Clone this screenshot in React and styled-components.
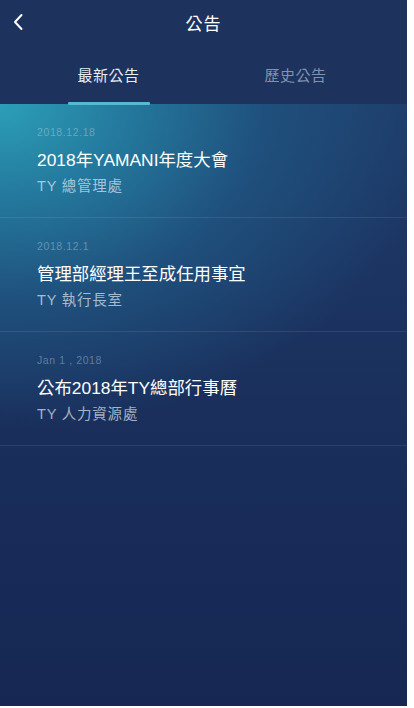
import React from "react";
import styled, { createGlobalStyle } from "styled-components";

const Global = createGlobalStyle`
  html, body { margin: 0; padding: 0; background: #ffffff; }
  body { font-family: "Liberation Sans", "Noto Sans CJK TC", sans-serif; }
`;

const Screen = styled.div`
  width: 407px;
  height: 706px;
  display: flex;
  flex-direction: column;
  background: #1d335e;
  overflow: hidden;
`;

const Header = styled.header`
  height: 48px;
  box-sizing: border-box;
  padding-bottom: 4px;
  display: grid;
  grid-template-columns: 48px 1fr 48px;
  align-items: center;
  color: #fff;
`;

const Back = styled.button`
  border: 0;
  background: none;
  padding: 0 0 0 12px;
  display: flex;
  align-items: center;
  height: 100%;
  cursor: pointer;
`;

const Title = styled.h1`
  margin: 0;
  text-align: center;
  font-size: 17px;
  font-weight: 400;
  color: #ffffff;
  letter-spacing: 1px;
`;

const Tabs = styled.nav`
  height: 56px;
  display: grid;
  grid-template-columns: 1fr 1fr;
  padding: 0 18px 0 15px;
`;

const Tab = styled.div`
  position: relative;
  display: flex;
  align-items: center;
  justify-content: center;
  padding-bottom: 3px;
  font-size: 15px;
  color: ${(p) => (p.$active ? "#e6edf5" : "rgba(200,212,230,0.6)")};
  letter-spacing: 0.5px;
  &::after {
    content: "";
    display: ${(p) => (p.$active ? "block" : "none")};
    position: absolute;
    bottom: -1px;
    left: 50%;
    transform: translateX(-50%);
    width: 82px;
    height: 3px;
    border-radius: 1px;
    background: #56b9d3;
  }
`;

const Content = styled.main`
  flex: 1;
  background:
    radial-gradient(ellipse 120% 60% at 0% 0%, #2c9fb7 0%, #247a9e 25%, #1f4f7c 55%, rgba(30, 58, 100, 0) 90%),
    linear-gradient(180deg, #1e3b6a 0%, #1a2f5c 50%, #162753 100%);
`;

const Item = styled.article`
  height: 114px;
  box-sizing: border-box;
  padding: 21px 20px 0 37px;
  border-bottom: 1px solid rgba(255, 255, 255, 0.09);
`;

const Date = styled.div`
  font-size: 10.5px;
  letter-spacing: 0.6px;
  color: rgba(210, 225, 240, 0.38);
  line-height: 14px;
`;

const Headline = styled.div`
  margin-top: 9px;
  font-size: 17.4px;
  line-height: 24px;
  color: #ffffff;
`;

const Sub = styled.div`
  margin-top: 4px;
  font-size: 14.5px;
  line-height: 20px;
  letter-spacing: 0.8px;
  color: rgba(220, 230, 242, 0.72);
`;

const items = [
  { date: "2018.12.18", title: "2018年YAMANI年度大會", sub: "TY 總管理處" },
  { date: "2018.12.1", title: "管理部經理王至成任用事宜", sub: "TY 執行長室" },
  { date: "Jan 1 , 2018", title: "公布2018年TY總部行事曆", sub: "TY 人力資源處" },
];

export default function App() {
  return (
    <>
      <Global />
      <Screen>
        <Header>
          <Back aria-label="back">
            <svg width="12" height="18" viewBox="0 0 12 18">
              <path d="M9.5 2 L3 9 L9.5 16" stroke="#fff" strokeWidth="2" fill="none" strokeLinecap="round" strokeLinejoin="round" />
            </svg>
          </Back>
          <Title>公告</Title>
          <span />
        </Header>
        <Tabs>
          <Tab $active>最新公告</Tab>
          <Tab>歷史公告</Tab>
        </Tabs>
        <Content>
          {items.map((it) => (
            <Item key={it.title}>
              <Date>{it.date}</Date>
              <Headline>{it.title}</Headline>
              <Sub>{it.sub}</Sub>
            </Item>
          ))}
        </Content>
      </Screen>
    </>
  );
}
